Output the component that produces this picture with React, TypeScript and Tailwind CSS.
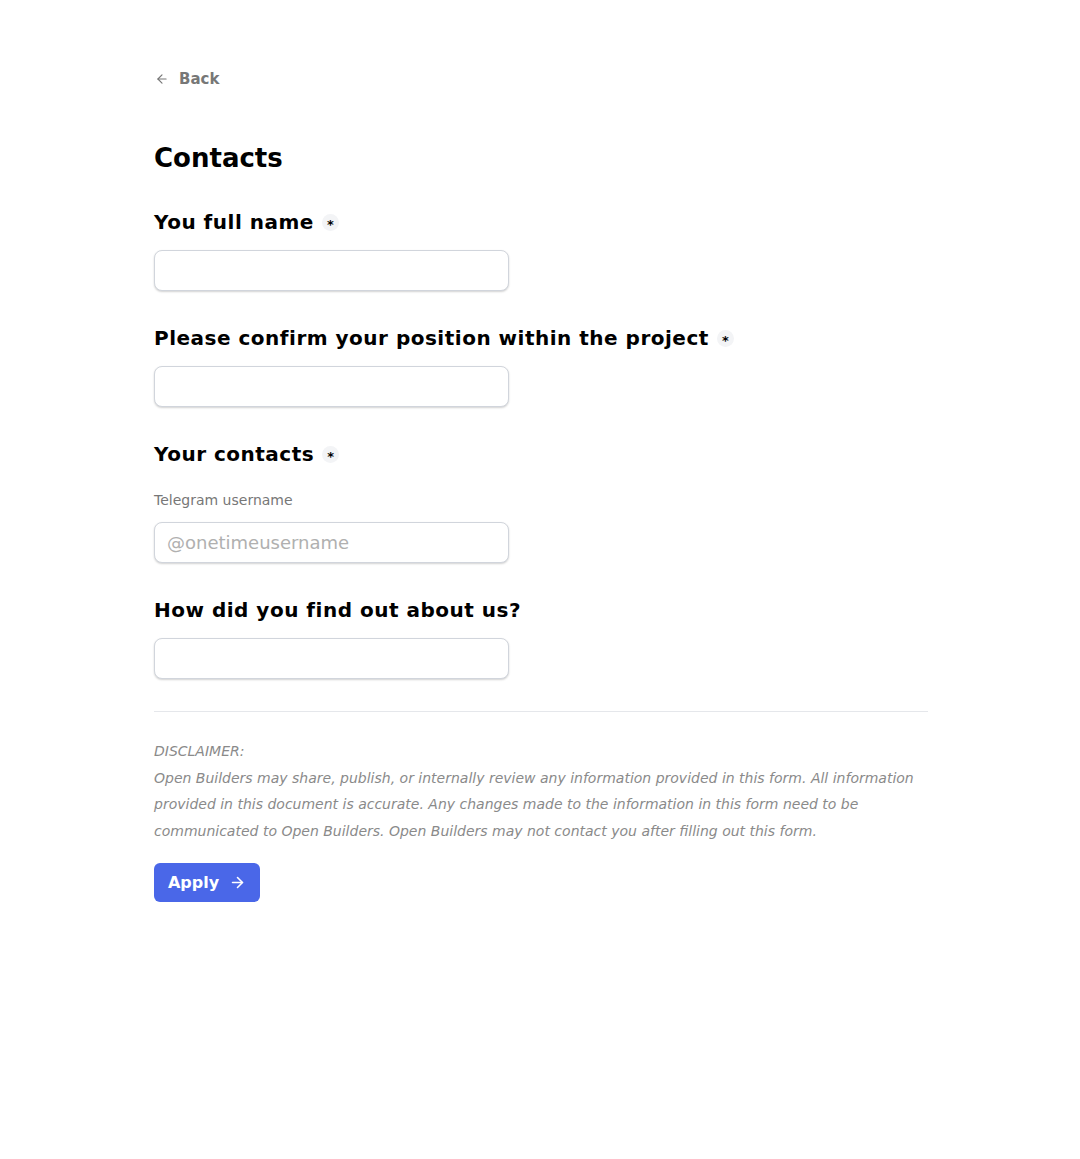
import { ArrowLeft, ArrowRight } from 'lucide-react';

function Required() {
  return (
    <span className="ml-2 inline-flex size-[17px] items-center justify-center rounded-full bg-gray-100 text-[13px] leading-none tracking-normal text-black">
      <span className="mt-[5px]">*</span>
    </span>
  );
}

const inputCls =
  "h-[41px] w-[355px] rounded-lg border border-gray-300 bg-white px-3 font-['DejaVu_Sans',sans-serif] text-[18px] shadow-[0_1px_2px_rgba(0,0,0,0.18)] outline-none placeholder:text-[#b0b0b0]";

function Field({ label, required }: { label: string; required?: boolean }) {
  return (
    <div>
      <h3 className="flex h-6 items-center text-[20px] font-bold tracking-[0.5px] text-black">
        {label}
        {required && <Required />}
      </h3>
      <input type="text" className={`mt-[16px] ${inputCls}`} />
    </div>
  );
}

export default function App() {
  return (
    <div className="min-h-[1159px] bg-white font-['DejaVu_Sans',sans-serif] text-black">
      <div className="ml-[154px] w-[774px] pt-[69px]">
        {/* Back */}
        <button className="flex h-5 items-center gap-[10px] pl-px text-[15px] font-bold text-[#777]">
          <ArrowLeft className="size-[14px]" strokeWidth={2} />
          Back
        </button>

        <h2 className="mt-[53px] text-[26px] font-bold leading-8">Contacts</h2>

        <div className="mt-[36px] space-y-[35px]">
          <Field label="You full name" required />
          <Field label="Please confirm your position within the project" required />
          <div>
            <h3 className="flex h-6 items-center text-[20px] font-bold tracking-[0.5px] text-black">
              Your contacts
              <Required />
            </h3>
            <p className="mt-[24px] text-[14px] leading-5 text-[#777]">Telegram username</p>
            <input type="text" placeholder="@onetimeusername" className={`mt-[12px] ${inputCls}`} />
          </div>
          <Field label="How did you find out about us?" />
        </div>

        <div className="mt-[32px] border-t border-gray-200" />

        {/* Disclaimer */}
        <p className="mt-[26px] text-[14px] italic leading-[26.5px] text-[#8a8a8a]">
          DISCLAIMER:
          <br />
          Open Builders may share, publish, or internally review any information provided in this form. All information
          <br />
          provided in this document is accurate. Any changes made to the information in this form need to be
          <br />
          communicated to Open Builders. Open Builders may not contact you after filling out this form.
        </p>

        <button className="mt-[19px] flex h-[39px] w-[106px] items-center justify-center gap-[10px] rounded-md bg-[#4a67e8] text-[16px] font-bold text-white">
          Apply
          <ArrowRight className="size-[17px]" strokeWidth={2.25} />
        </button>
      </div>
    </div>
  );
}
